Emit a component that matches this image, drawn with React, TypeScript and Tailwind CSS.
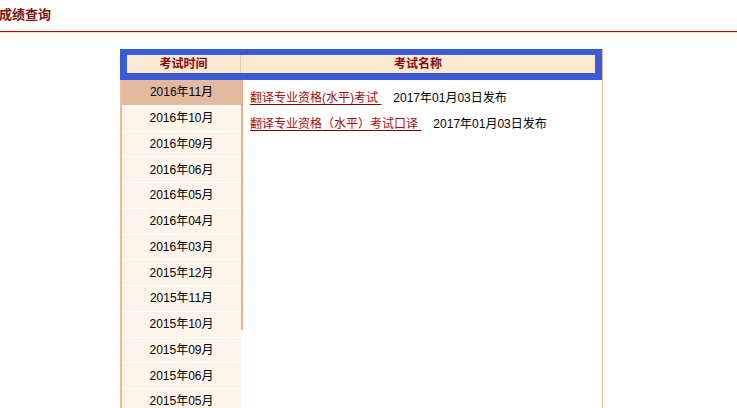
const months = [
  "2016年11月",
  "2016年10月",
  "2016年09月",
  "2016年06月",
  "2016年05月",
  "2016年04月",
  "2016年03月",
  "2015年12月",
  "2015年11月",
  "2015年10月",
  "2015年09月",
  "2015年06月",
  "2015年05月",
];

const results = [
  { title: "翻译专业资格(水平)考试", date: "2017年01月03日发布" },
  { title: "翻译专业资格（水平）考试口译", date: "2017年01月03日发布" },
];

export default function App() {
  const font = { fontFamily: '"Liberation Sans", "Noto Sans CJK SC", sans-serif' };

  return (
    <div className="h-[408px] w-[737px] overflow-hidden bg-white text-[12px] text-black" style={font}>
      {/* page title */}
      <div className="border-b border-[#a80f0f]">
        <h1 className="h-[31px] -ml-px pt-[7px] text-[13px] font-bold leading-[16px] text-[#7a1405]">
          成绩查询
        </h1>
      </div>
      <div className="h-px bg-[#f9d6bc]" />

      {/* table */}
      <div className="ml-[120px] mt-4 w-[483px] border-r border-[#f0b48c]">
        <div className="flex h-[31px] border-x-[7px] border-t-[6px] border-b-[7px] border-[#3a5bd4] bg-[#fde8d2] font-bold leading-[18px] text-[#8a0a0a]">
          <div className="w-[114px] border-r border-[#f2c6a6] text-center">考试时间</div>
          <div className="flex-1 text-center">考试名称</div>
        </div>

        <div className="flex">
          <div className="w-[121px] border-l-2 border-[#f0bc98]">
            {months.map((m, i) => (
              <div
                key={m}
                className={`flex h-[25.75px] items-center justify-center border-b border-white ${
                  i === 0 ? "bg-[#e3b99f]" : "bg-[#fdf4ea]"
                }`}
              >
                {m}
              </div>
            ))}
          </div>
          <div className="flex-1">
            <div className="h-[250px] border-l-2 border-[#eeae86] pl-[7px] pt-[5px]">
              {results.map((r) => (
                <div key={r.title} className="flex h-[26px] items-center">
                  <a href="#" className="text-[#a50d0d] underline decoration-[#8a0000] underline-offset-2">
                    {r.title}
                    {"\u00a0"}
                  </a>
                  <span className="ml-[12px]">{r.date}</span>
                </div>
              ))}
            </div>
          </div>
        </div>
      </div>
    </div>
  );
}
